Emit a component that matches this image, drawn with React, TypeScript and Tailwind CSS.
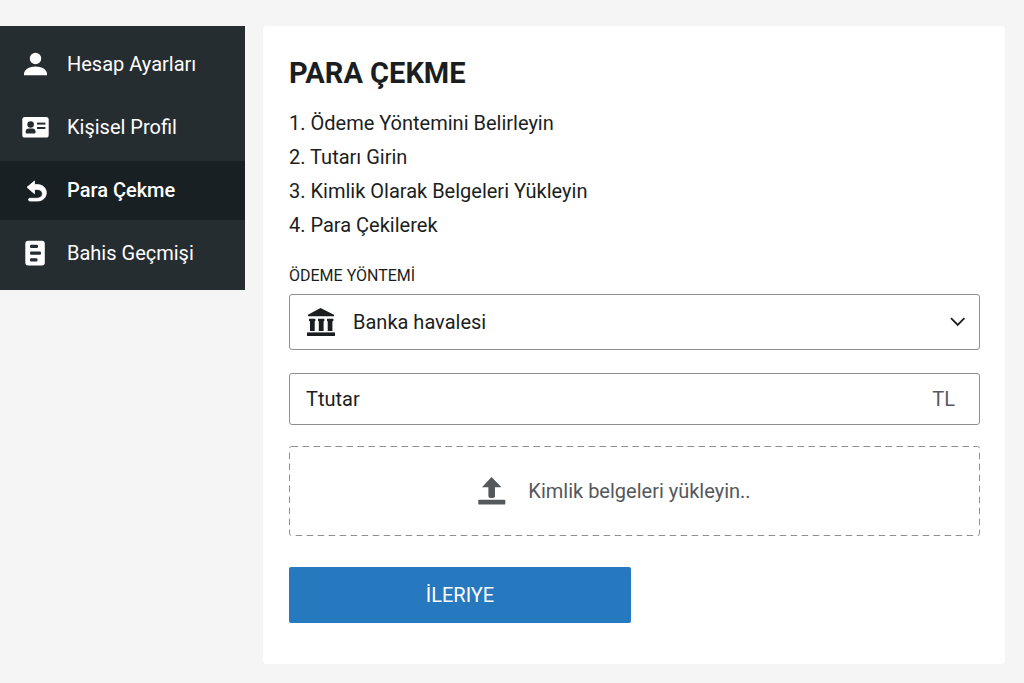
import { useState } from "react";
import type { ReactNode } from "react";

function UserIcon() {
  return (
    <svg viewBox="0 0 28 28" className="size-7" fill="currentColor" aria-hidden="true">
      <circle cx="13.5" cy="8.5" r="5.7" />
      <path d="M2 25.300v-1.300c0-4.400 5.200-7.400 11.500-7.400S25 19.600 25 24v1.300z" />
    </svg>
  );
}

function IdCardIcon() {
  return (
    <svg viewBox="0 0 28 28" className="size-7" aria-hidden="true">
      <rect x="0.3" y="4" width="26.4" height="20.5" rx="2.6" fill="#ffffff" />
      <g fill="#262d31">
        <circle cx="8.6" cy="11.5" r="3.300" />
        <path d="M3.600 18.900c0-2.200 1.400-3.400 3.200-3.400h3.600c1.800 0 3.200 1.200 3.200 3.400 0 1-.6 1.600-1.500 1.600h-7c-.9 0-1.500-.6-1.500-1.600z" />
        <rect x="15" y="9.600" width="8.400" height="2" />
        <rect x="15" y="14" width="8.400" height="2" />
      </g>
    </svg>
  );
}

function ReturnIcon() {
  return (
    <svg viewBox="0 0 28 28" className="size-7" fill="currentColor" aria-hidden="true">
      <path
        d="M5 11.300 12.500 5v3.600h2.800c5 0 9 3.200 9 8.100s-3.800 8.300-8.900 8.300H7.800c-1.700 0-1.700-2.700 0-2.700h6.800c3.600 0 5.800-1.900 5.800-4.600s-2.100-4.300-5.300-4.300h-2.600v4.300z"
        stroke="currentColor"
        strokeWidth=".8"
        strokeLinejoin="round"
      />
    </svg>
  );
}

function HistoryIcon() {
  return (
    <svg viewBox="0 0 28 28" className="size-7" aria-hidden="true">
      <rect x="3.300" y="1.800" width="19.500" height="24.700" rx="3" fill="#ffffff" />
      <g fill="#262d31">
        <rect x="8" y="5.800" width="8" height="3.200" rx="1.200" />
        <rect x="8" y="12.500" width="11" height="3.200" rx="1.200" />
        <rect x="8" y="19.300" width="7.500" height="3.200" rx="1.200" />
      </g>
    </svg>
  );
}

function BankIcon() {
  return (
    <svg viewBox="0 0 28 28" className="size-7" fill="currentColor" aria-hidden="true">
      <path d="M13.500 0 27 6.700v1.600H1V6.700z" />
      <path d="M2 10.700h6.400v2.100l-.7.8v9.500H3v-9.500l-1-.8zM11 10.700h6.400v2.100l-.8.800v9.500h-4.800v-9.500l-.8-.8zM20 10.700h6.400v2.100l-1 .8v9.500h-4.700v-9.500l-.7-.8z" />
      <path d="M0 24.400h28V28H0z" />
    </svg>
  );
}

function UploadIcon() {
  return (
    <svg viewBox="0 0 28 28" className="size-7" fill="currentColor" aria-hidden="true">
      <path d="M13.500 0 23.500 10.300H17v8.800c0 1-.8 1.800-1.800 1.800h-3c-1 0-1.800-.8-1.800-1.800v-8.800H4z" />
      <rect x="0.300" y="22.800" width="27" height="4.600" rx=".6" />
    </svg>
  );
}

function ChevronIcon() {
  return (
    <svg viewBox="0 0 16 16" className="size-4" fill="none" stroke="currentColor" strokeWidth="1.800" aria-hidden="true">
      <path d="m1 4.200 6.700 6.800 6.700-6.800" />
    </svg>
  );
}

const menu: { label: string; icon: ReactNode; active?: boolean }[] = [
  { label: "Hesap Ayarları", icon: <UserIcon /> },
  { label: "Kişisel Profil", icon: <IdCardIcon /> },
  { label: "Para Çekme", icon: <ReturnIcon />, active: true },
  { label: "Bahis Geçmişi", icon: <HistoryIcon /> },
];

const steps = [
  "Ödeme Yöntemini Belirleyin",
  "Tutarı Girin",
  "Kimlik Olarak Belgeleri Yükleyin",
  "Para Çekilerek",
];

export default function App() {
  const [amount, setAmount] = useState("");

  return (
    <div className="flex min-h-screen items-start gap-[18px] bg-[#f5f5f5] py-[26px] pr-[19px] font-['Roboto',sans-serif] text-xl text-[#1b1e21]">
      <nav className="flex w-[245px] shrink-0 flex-col gap-1 bg-[#262d31] pt-[9px] pb-[7px] text-white">
        {menu.map(({ label, icon, active }) => (
          <a
            key={label}
            href="#"
            aria-current={active ? "page" : undefined}
            className={
              active
                ? "flex h-[59px] items-center gap-[17px] bg-[#192024] px-[22px] pb-[2px] font-medium"
                : "flex h-[59px] items-center gap-[17px] px-[22px] pb-[2px]"
            }
          >
            {icon}
            <span>{label}</span>
          </a>
        ))}
      </nav>

      <main className="min-w-0 flex-1 rounded bg-white pt-[27px] pr-[25px] pb-[41px] pl-[26px]">
        <h1 className="text-[29px] leading-10 font-bold">PARA ÇEKME</h1>
        <ol className="mt-[13px] leading-[34px]">
          {steps.map((step, i) => (
            <li key={step}>
              {i + 1}. {step}
            </li>
          ))}
        </ol>

        <form onSubmit={(e) => e.preventDefault()}>
          <label htmlFor="method" className="mt-[22px] block text-base leading-6">
            ÖDEME YÖNTEMİ
          </label>
          <div className="relative mt-[6px]">
            <select
              id="method"
              className="h-14 w-full appearance-none rounded-[3px] border border-[#8f8f8f] bg-white pr-12 pl-[63px]"
            >
              <option>Banka havalesi</option>
            </select>
            <span className="pointer-events-none absolute inset-y-0 left-[18px] flex items-center">
              <BankIcon />
            </span>
            <span className="pointer-events-none absolute inset-y-0 right-[14px] flex items-center">
              <ChevronIcon />
            </span>
          </div>

          <div className="mt-[23px] flex h-[52px] items-center rounded-[3px] border border-[#8f8f8f] pr-6 pl-4">
            <input
              type="text"
              inputMode="decimal"
              aria-label="Ttutar"
              placeholder="Ttutar"
              value={amount}
              onChange={(e) => setAmount(e.target.value)}
              className="min-w-0 flex-1 bg-transparent outline-none placeholder:text-[#1b1e21]"
            />
            <span className="text-[#54585b]">TL</span>
          </div>

          <label className="relative mt-[21px] flex h-[90px] cursor-pointer items-center justify-center gap-[22px] pr-10 text-[#54585b]">
            <svg className="absolute inset-0 size-full" aria-hidden="true">
              <rect
                x="0.5"
                y="0.5"
                rx="2"
                fill="none"
                stroke="#8f8f8f"
                strokeDasharray="6.500 4.500"
                className="h-[calc(100%-1px)] w-[calc(100%-1px)]"
              />
            </svg>
            <UploadIcon />
            <span>Kimlik belgeleri yükleyin..</span>
            <input type="file" className="sr-only" />
          </label>

          <button type="submit" className="mt-[31px] h-14 w-[342px] max-w-full rounded-[2px] bg-[#2779bf] text-white">
            İLERIYE
          </button>
        </form>
      </main>
    </div>
  );
}
